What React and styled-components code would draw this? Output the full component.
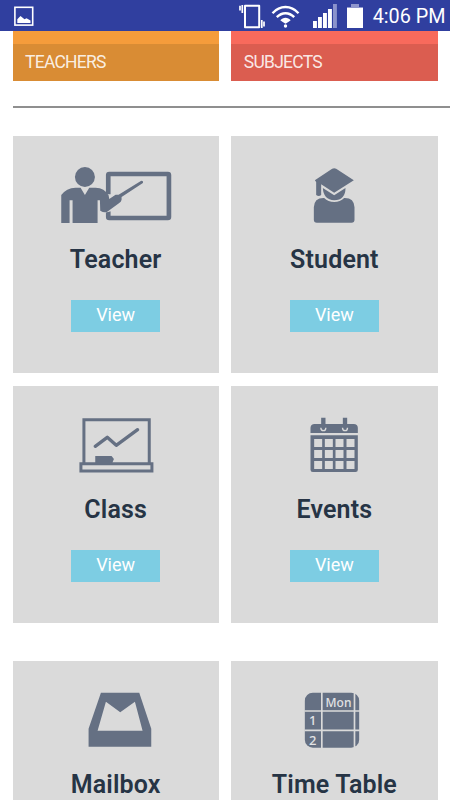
import React from "react";
import styled, { createGlobalStyle } from "styled-components";

const GlobalStyle = createGlobalStyle`
  * {
    box-sizing: border-box;
  }

  body {
    background: #fff;
    font-family: Roboto, "Liberation Sans", sans-serif;
    margin: 0;
    overflow: hidden;
  }
`;

const ink = "#657083";
const paper = "#dadada";

// Status bar icons

const PictureIcon = () => (
  <svg width="21" height="21" viewBox="0 0 21 21">
    <rect x="1.9" y="1.3" width="17.8" height="17.8" fill="none" stroke="#fff" strokeWidth="1.6" />
    <path d="M4.3 17V13.3L7.5 10L11.5 13.3L13.5 12.3L17.5 14.5V17Z" fill="#fff" />
  </svg>
);

const VibrateIcon = () => (
  <svg width="26" height="25" viewBox="0 0 26 25">
    <path
      d="M6 1.8H20.2V23.2H6Z"
      fill="none"
      stroke="#fff"
      strokeWidth="2"
      strokeLinejoin="round"
    />
    <path d="M3.3 1V9M1 1.8V6.5M22.8 16V24M25 17.5V22.5" stroke="#fff" strokeWidth="1.7" />
  </svg>
);

const WifiIcon = () => (
  <svg width="29" height="24" viewBox="0 0 29 24">
    <g fill="none" stroke="#fff" strokeWidth="2.4">
      <path d="M1.5 9.2C9 1 20 1 27.5 9.2" />
      <path d="M5.8 13.2C11 8 18 8 23.2 13.2" />
    </g>
    <path d="M9.3 16.3C12 12.8 17 12.8 19.7 16.3L18 17.5L14.5 19.8L11 17.5Z" fill="#fff" />
    <circle cx="14.5" cy="22" r="1.7" fill="#fff" />
  </svg>
);

const SignalIcon = () => (
  <svg width="24" height="24" viewBox="0 0 24 24">
    <path d="M0 17H3.9V24H0ZM5 13H8.9V24H5ZM10 9H13.9V24H10ZM15 5H18.9V24H15Z" fill="#fff" />
    <path d="M20 0H23.9V24H20Z" fill="#8b93cc" />
  </svg>
);

const BatteryIcon = () => (
  <svg width="16" height="25" viewBox="0 0 16 25">
    <path d="M4 0H12V3H16V6H0V3H4Z" fill="#9097cd" />
    <rect y="4" width="16" height="20" fill="#fff" />
  </svg>
);

// Card icons

const TeacherIcon = () => (
  <Art viewBox="2.25 0 390 240">
    <rect x="174" y="57" width="182" height="132" rx="3" fill="none" stroke={ink} strokeWidth="14" />
    <path d="M160 118H186L200 116L216 136L186 168L160 174Z" fill={paper} />
    <circle cx="104" cy="66" r="30" fill={ink} />
    <path
      d="M33 204V120Q48 99 76 98H91L104 120L117 98H136Q163 99 175 121L177 132L196 119H205L273 77Q280 77 278 84L214 126V134Q213 140 206 145L171 170Q163 175 150 167L149 136H142V204H67V136H58V204Z"
      fill={ink}
    />
  </Art>
);

const StudentIcon = () => (
  <Art viewBox="-61.5 0 390 240">
    <g fill={ink}>
      <path d="M76 76L128 41Q134 38 140 41L193 76L134 113L95 88V120Q88 126 80 120V81Z" />
      <path d="M100 99L134 121L168 99Q168 135 134 136Q102 134 100 99Z" />
      <path d="M73 194V157Q74 128 104 129Q116 141 134 141Q152 141 164 129Q194 128 195 157V194Q195 203 186 203H82Q73 203 73 194Z" />
    </g>
  </Art>
);

const ClassIcon = () => (
  <Art viewBox="-27.75 0 390 240">
    <path d="M71 172V44H267V172M62 176H275V198H62Z" fill="none" stroke={ink} strokeWidth="9" />
    <path
      d="M105 124L141 97L168 121L232 74"
      fill="none"
      stroke={ink}
      strokeWidth="10"
      strokeLinecap="round"
      strokeLinejoin="round"
    />
    <path d="M105 174V153H154L161 162L156 174Z" fill={ink} />
  </Art>
);

const EventsIcon = () => (
  <Art viewBox="-61.5 0 390 240">
    <path d="M63 84V68Q64 57 75 57H95V38H108V57H160V38H173V57H193Q204 57 205 68V84Z" fill={ink} />
    <path d="M63 91H205V194Q205 201 198 201H70Q63 201 63 194Z" fill={ink} />
    <path
      d="M94 68Q94 77 102 77Q109 77 109 68M159 68Q159 77 167 77Q174 77 174 68"
      fill="none"
      stroke={paper}
      strokeWidth="4"
    />
    {[102, 135, 168].map((y) =>
      [74, 106, 138, 171].map((x) => (
        <rect key={`${x}-${y}`} x={x} y={y} width="24" height="24" fill={paper} />
      ))
    )}
  </Art>
);

const MailboxIcon = () => (
  <Art viewBox="-57.75 0 390 240">
    <path
      d="M92 38H207L243 146V200H55V146ZM107 65L82 152H217L194 65L150 97Z"
      fill={ink}
      fillRule="evenodd"
    />
  </Art>
);

const TimeTableIcon = () => (
  <Art viewBox="-62.5 0 390 240">
    <rect x="45" y="38" width="163" height="165" rx="24" fill={ink} />
    <path d="M96 36V206M194 36V206M44 93H210M44 151H210" stroke={paper} strokeWidth="5" />
    <g fill="#e2e3e5" fontFamily="'Noto Sans', sans-serif" fontWeight="500" textAnchor="middle">
      <text x="146" y="80" fontSize="36">Mon</text>
      <text x="69" y="136" fontSize="39">1</text>
      <text x="69" y="196" fontSize="39">2</text>
    </g>
  </Art>
);

let rows = [
  [
    { name: "Teacher", icon: TeacherIcon },
    { name: "Student", icon: StudentIcon },
  ],
  [
    { name: "Class", icon: ClassIcon },
    { name: "Events", icon: EventsIcon },
  ],
  [
    { name: "Mailbox", icon: MailboxIcon },
    { name: "Time Table", icon: TimeTableIcon },
  ],
];

const App = () => {
  return (
    <Screen>
      <GlobalStyle />
      <StatusBar>
        <PictureIcon />
        <Indicators>
          <VibrateIcon />
          <WifiIcon />
          <SignalIcon />
          <BatteryIcon />
          <Clock>4:06 PM</Clock>
        </Indicators>
      </StatusBar>

      <Counters>
        <Counter $top="#f59c3b" $color="#d98c34">TEACHERS</Counter>
        <Counter $top="#f86a5c" $color="#db5d50">SUBJECTS</Counter>
      </Counters>
      <Divider />

      {rows.map((row, i) => (
        <Row key={i} $gap={i === 1 ? 38 : 13}>
          {row.map((item) => (
            <Card key={item.name}>
              <item.icon />
              <Title>{item.name}</Title>
              <View>View</View>
            </Card>
          ))}
        </Row>
      ))}
    </Screen>
  );
};

// Screen

const Screen = styled.div`
  height: 800px;
  overflow: hidden;
  width: 450px;
`;

// Status bar

const StatusBar = styled.div`
  align-items: center;
  background: #303f9f;
  display: flex;
  height: 31px;
  justify-content: space-between;
  padding: 1px 4.5px 0 13px;

  svg {
    display: block;
    flex: none;
  }
`;
const Indicators = styled.div`
  align-items: center;
  display: flex;

  svg:nth-child(2) {
    margin-left: 6px;
  }
  svg:nth-child(3) {
    margin-left: 13px;
  }
  svg:nth-child(4) {
    margin-left: 10px;
  }
`;
const Clock = styled.div`
  color: #fff;
  font-size: 19.8px;
  line-height: 28px;
  margin-left: 9.5px;
  padding-top: 1px;
  white-space: nowrap;
`;

// Counters

const Counters = styled.div`
  display: grid;
  gap: 12.5px;
  grid-template-columns: 206.25px 206.25px;
  padding-left: 12.5px;
`;
const Counter = styled.div`
  background: ${(props) => props.$color};
  border-top: 13.5px solid ${(props) => props.$top};
  color: rgba(255, 255, 255, 0.87);
  font-size: 17.5px;
  height: 50px;
  letter-spacing: -0.75px;
  line-height: 36px;
  padding-left: 12.5px;
`;
const Divider = styled.div`
  background: #8f8f8f;
  height: 2px;
  margin: 25px 0 28px 12.5px;
`;

// Cards

const Row = styled.div`
  display: grid;
  gap: 12.5px;
  grid-template-columns: 206.25px 206.25px;
  margin-bottom: ${(props) => props.$gap}px;
  padding-left: 12.5px;
`;
const Card = styled.div`
  align-items: center;
  background: ${paper};
  display: flex;
  flex-direction: column;
  height: 237px;
  padding-top: 19px;
`;
const Art = styled.svg`
  display: block;
  flex: none;
  height: 80px;
  width: 130px;
`;
const Title = styled.div`
  color: #263445;
  font-size: 25px;
  font-weight: 600;
  letter-spacing: 0.15px;
  line-height: 28px;
  margin-top: 11px;
  white-space: nowrap;
`;
const View = styled.button`
  background: #7dcde3;
  border: 0;
  color: #fff;
  cursor: pointer;
  font-family: inherit;
  font-size: 18px;
  height: 32px;
  letter-spacing: 0;
  line-height: 28px;
  margin-top: 26px;
  padding: 0 0 2px;
  width: 89px;
`;

export default App;
